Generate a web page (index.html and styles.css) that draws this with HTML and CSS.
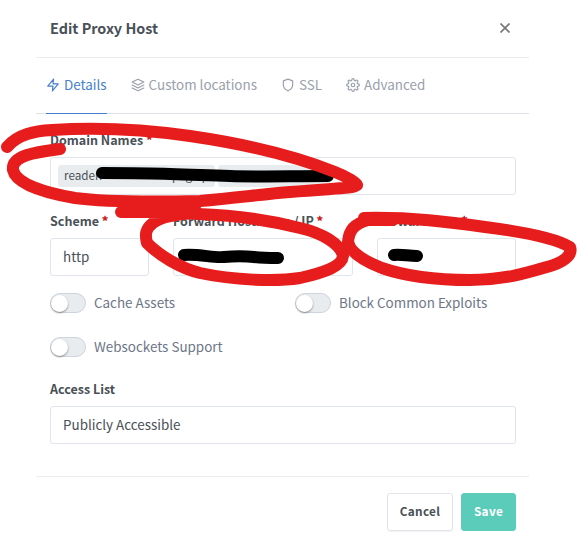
FILE: index.html
```html
<!DOCTYPE html>
<html lang="en">
<head>
<meta charset="utf-8">
<title>Edit Proxy Host</title>
<link rel="stylesheet" href="styles.css">
</head>
<body>
<div class="modal">
  <header class="modal-header">
    <h5 class="modal-title">Edit Proxy Host</h5>
    <svg class="close" viewBox="0 0 10 10"><path d="M.5.5l9 9M9.5.5l-9 9"/></svg>
  </header>
  <nav class="tabs">
    <a class="tab active"><svg class="icon" viewBox="0 0 24 24"><path d="M13 2L3 14h9l-1 8 10-12h-9l1-8z"/></svg><span>Details</span></a>
    <a class="tab"><svg class="icon" viewBox="0 0 24 24"><path d="M12 2L2 7l10 5 10-5-10-5zM2 17l10 5 10-5M2 12l10 5 10-5"/></svg><span>Custom locations</span></a>
    <a class="tab"><svg class="icon" viewBox="0 0 24 24"><path d="M12 22s8-4 8-10V5l-8-3-8 3v7c0 6 8 10 8 10z"/></svg><span>SSL</span></a>
    <a class="tab"><svg class="icon" viewBox="0 0 24 24"><circle cx="12" cy="12" r="3"/><path d="M19.4 15a1.65 1.65 0 0 0 .33 1.82l.06.06a2 2 0 1 1-2.83 2.83l-.06-.06a1.65 1.65 0 0 0-2.8 1.18V21a2 2 0 0 1-4 0v-.09A1.65 1.65 0 0 0 9 19.4a1.65 1.65 0 0 0-1.82.33l-.06.06a2 2 0 1 1-2.83-2.83l.06-.06A1.65 1.65 0 0 0 3.17 14H3a2 2 0 0 1 0-4h.09A1.65 1.65 0 0 0 4.6 9a1.65 1.65 0 0 0-.33-1.82l-.06-.06a2 2 0 1 1 2.83-2.83l.06.06A1.65 1.65 0 0 0 10 3.17V3a2 2 0 0 1 4 0v.09a1.65 1.65 0 0 0 2.82 1.18l.06-.06a2 2 0 1 1 2.83 2.83l-.06.06A1.65 1.65 0 0 0 20.83 10H21a2 2 0 0 1 0 4h-.09A1.65 1.65 0 0 0 19.4 15z"/></svg><span>Advanced</span></a>
  </nav>
  <main class="modal-body">
    <div class="field">
      <label class="label">Domain Names <b>*</b></label>
      <div class="control chips"><span class="chip chip-first"><span>readen</span><span>page.p</span></span><span class="chip chip-second"></span></div>
    </div>
    <div class="row">
      <div class="field">
        <label class="label">Scheme <b>*</b></label>
        <div class="control">http</div>
      </div>
      <div class="field">
        <label class="label">Forward Hostname / IP <b>*</b></label>
        <div class="control"></div>
      </div>
      <div class="field">
        <label class="label">Forward Port <b>*</b></label>
        <div class="control"></div>
      </div>
    </div>
    <div class="switches">
      <label class="switch"><i class="track"></i><span>Cache Assets</span></label>
      <label class="switch"><i class="track"></i><span>Block Common Exploits</span></label>
      <label class="switch"><i class="track"></i><span>Websockets Support</span></label>
    </div>
    <div class="field">
      <label class="label">Access List</label>
      <div class="control">Publicly Accessible</div>
    </div>
  </main>
  <footer class="modal-footer">
    <button class="btn cancel">Cancel</button>
    <button class="btn save">Save</button>
  </footer>
</div>
<svg class="marker" viewBox="0 0 579 544">
  <g class="black">
    <path d="M102 173C125 173 148 173 170 174S205 175 230 176S290 176 328 176"/>
    <path d="M184 255C200 254 213 258 224 257S245 256 254 257S270 258 278 258"/>
    <path d="M394 255C401 254 408 256 417 256"/>
  </g>
  <g class="red">
    <path d="M7 147C18 134 35 131 52 130C100 127 148 130 190 136C245 144 295 156 335 172C348 177 356 183 357 185C352 189 335 188 290 192C265 194 235 198 200 201C155 202 105 202 75 198C45 193 16 184 13 170C11 155 37 152 60 149"/>
    <path d="M121 212C145 212 176 211 198 214C230 215 265 219 300 228C322 233 341 244 343 256C342 266 326 272 300 278C275 282 233 280 200 273C180 268 160 256 147 243C145 235 145 229 153 223C160 217 176 214 198 213"/>
    <path d="M140 207L195 206"/>
    <path d="M393 220H368C354 224 349 230 348 242C350 252 364 261 382 268C405 276 438 280 470 280C505 280 530 272 547 267C562 263 573 256 570 247C557 239 525 232 485 227C450 222 411 217 364 218"/>
  </g>
</svg>
</body>
</html>
```
FILE: styles.css
```css
* { box-sizing: border-box; }
body {
  margin: 0;
  height: 544px;
  position: relative;
  overflow: hidden;
  background: #fff;
  color: #495057;
  font-family: "Noto Sans CJK SC", "Open Sans", sans-serif;
  font-size: 13.43px;
  line-height: 20px;
}
.modal { width: 493px; margin-left: 36px; }
.modal-header {
  height: 58px;
  padding: 0 19px 2px 14px;
  display: flex;
  align-items: center;
  justify-content: space-between;
  border-bottom: 1px solid #e9ecef;
}
.modal-title { margin: 0; font-size: 14.4px; font-weight: 700; }
.close { width: 10px; height: 10px; fill: none; stroke: #77797b; stroke-width: 1.7; }
.tabs {
  height: 56px;
  padding-left: 10px;
  display: flex;
  gap: 24px;
  border-bottom: 1px solid #dee2e6;
  color: #9aa0ac;
}
.tab {
  height: 56px;
  padding-bottom: 2px;
  display: flex;
  align-items: center;
  gap: 4px;
  border-bottom: 1px solid transparent;
  white-space: nowrap;
}
.tab span { padding-bottom: 1px; }
.tab.active { color: #467fcf; border-color: #467fcf; }
.icon {
  width: 14px;
  height: 14px;
  fill: none;
  stroke: currentColor;
  stroke-width: 2;
  stroke-linecap: round;
  stroke-linejoin: round;
}
.modal-body { height: 362px; padding: 16px 13px 0 14px; }
.label {
  display: block;
  height: 20px;
  margin-bottom: 7px;
  font-size: 12.5px;
  font-weight: 700;
  white-space: nowrap;
}
.label b { color: #cd201f; }
.control {
  height: 38px;
  padding: 0 12px 2px;
  display: flex;
  align-items: center;
  border: 1px solid #e0e5ec;
  border-radius: 3px;
}
.chips { padding: 0 7px; gap: 3px; }
.chip {
  height: 22px;
  padding: 0 6px;
  border-radius: 3px;
  background: #e9ecef;
  font-size: 11.7px;
}
.chip-first { width: 157px; display: flex; justify-content: space-between; }
.chip-second { width: 112px; }
.row {
  display: grid;
  grid-template-columns: 99px 180px 139px;
  gap: 24px;
  margin-top: 16px;
}
.switches {
  display: grid;
  grid-template-columns: 245px 1fr;
  row-gap: 24px;
  margin: 17px 0 22px;
  color: #6e7687;
}
.switch { height: 20px; display: flex; align-items: center; gap: 8px; }
.switch span { padding-bottom: 2px; }
.track {
  width: 36px;
  height: 20px;
  border: 1px solid #ced4dc;
  border-radius: 10px;
  background: #e9ecef;
}
.track::before {
  content: "";
  display: block;
  width: 17px;
  height: 17px;
  margin-top: .5px;
  border-radius: 50%;
  background: #fff;
  box-shadow: 0 1px 2px rgba(0, 0, 0, .4);
}
.modal-footer {
  height: 68px;
  padding: 16px 13px 0;
  display: flex;
  justify-content: flex-end;
  gap: 8px;
  border-top: 1px solid #e9ecef;
}
.btn {
  height: 38px;
  padding: 0 0 2px;
  border: 1px solid #e0e5ec;
  border-radius: 3px;
  background: #fff;
  color: #495057;
  font: 700 11.8px/20px "Noto Sans CJK SC", "Open Sans", sans-serif;
  letter-spacing: .3px;
}
.cancel { width: 66px; box-shadow: 0 1px 1px rgba(0, 0, 0, .05); }
.save { width: 55px; border-color: #5bcbba; background: #5bcbba; color: #fff; }
.marker { position: absolute; inset: 0; width: 579px; height: 544px; }
.marker g { fill: none; stroke-width: 12; stroke-linecap: round; stroke-linejoin: round; }
.black { stroke: #000; }
.red { stroke: #e71d1d; }
```
